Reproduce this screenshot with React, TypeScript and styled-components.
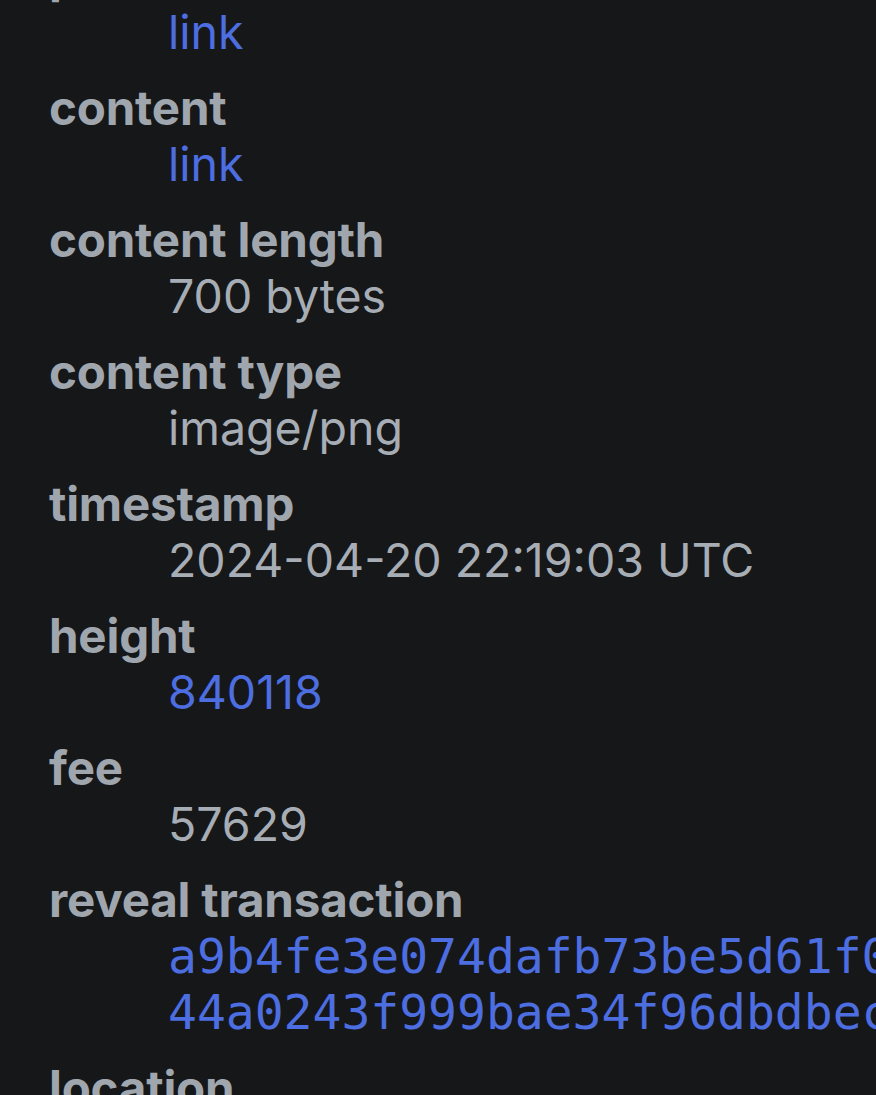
import React from "react";
import styled, { createGlobalStyle } from "styled-components";

const Global = createGlobalStyle`
  html, body {
    margin: 0;
    padding: 0;
    background: #161719;
  }
  body {
    font-family: Inter, "Noto Sans", "Liberation Sans", sans-serif;
    overflow: hidden;
  }
`;

const Page = styled.div`
  width: 876px;
  height: 1095px;
  overflow: hidden;
  background: #161719;
`;

const List = styled.dl`
  margin: -52px 0 0 0;
  padding: 0 0 0 49px;
  display: flex;
  flex-direction: column;
  gap: 20px;
`;

const Group = styled.div`
  display: flex;
  flex-direction: column;
`;

const Term = styled.dt`
  font-weight: 700;
  font-size: 47.5px;
  line-height: 56px;
  color: #a0a6ae;
  letter-spacing: -0.2px;
  white-space: nowrap;
`;

const Desc = styled.dd<{ $link?: boolean; $mono?: boolean }>`
  margin: 0 0 0 119px;
  font-size: ${(p) => (p.$mono ? "48px" : "46.5px")};
  line-height: 56px;
  font-weight: 400;
  color: ${(p) => (p.$link ? "#4d6ee0" : "#a7adb5")};
  font-family: ${(p) =>
    p.$mono ? '"DejaVu Sans Mono", "Liberation Mono", monospace' : "inherit"};
  white-space: ${(p) => (p.$mono ? "pre" : "nowrap")};
  letter-spacing: 0;
`;

const Link = styled.a`
  color: inherit;
  text-decoration: none;
`;

type Row = { term: string; value: string; link?: boolean; mono?: boolean };

const rows: Row[] = [
  { term: "preview", value: "link", link: true },
  { term: "content", value: "link", link: true },
  { term: "content length", value: "700 bytes" },
  { term: "content type", value: "image/png" },
  { term: "timestamp", value: "2024-04-20 22:19:03 UTC" },
  { term: "height", value: "840118", link: true },
  { term: "fee", value: "57629" },
  {
    term: "reveal transaction",
    value:
      "a9b4fe3e074dafb73be5d61f0c2a\n44a0243f999bae34f96dbdbec1e7",
    link: true,
    mono: true,
  },
  {
    term: "location",
    value: "a9b4fe3e074dafb73be5d61f0c2a",
    link: true,
    mono: true,
  },
];

export default function App() {
  return (
    <Page>
      <Global />
      <List>
        {rows.map((r) => (
          <Group key={r.term}>
            <Term>{r.term}</Term>
            <Desc $link={r.link} $mono={r.mono}>
              {r.link ? <Link href="#">{r.value}</Link> : r.value}
            </Desc>
          </Group>
        ))}
      </List>
    </Page>
  );
}
